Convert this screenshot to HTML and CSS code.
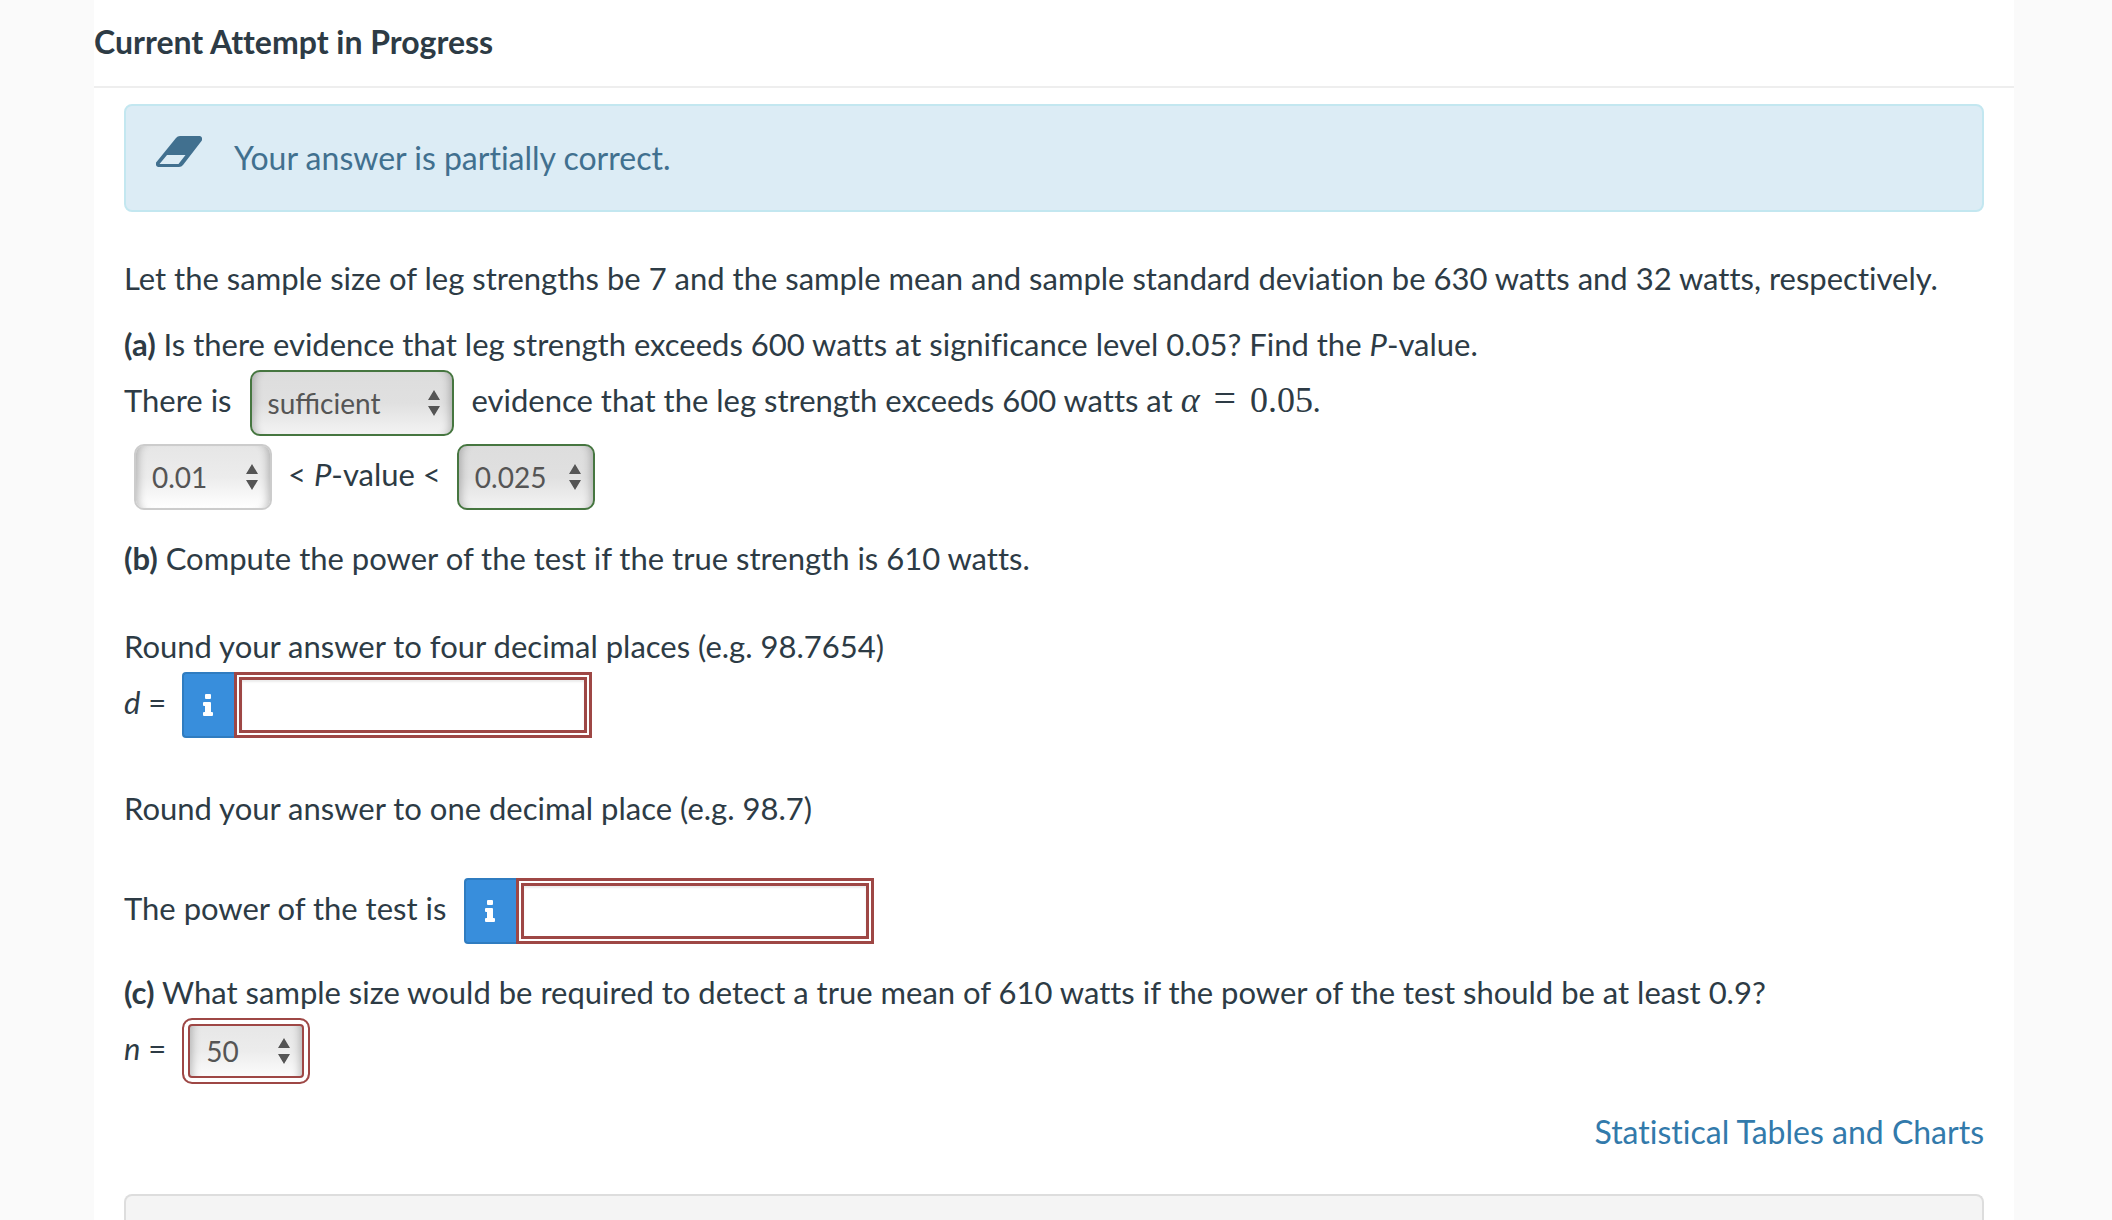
FILE: index.html
```html
<!DOCTYPE html>
<html lang="en">
<head>
<meta charset="utf-8">
<title>Current Attempt in Progress</title>
<link rel="stylesheet" href="styles.css">
</head>
<body>
<main class="panel">
  <header class="panel-header">
    <h1 class="title">Current Attempt in Progress</h1>
  </header>
  <div class="content">
    <div class="alert" role="status">
      <svg class="alert-icon" viewBox="0 0 46 31" aria-hidden="true">
        <path fill-rule="evenodd" d="M24 0H43a3 3 0 0 1 2.500 5L27 29a5 5 0 0 1-4 2H3a3 3 0 0 1-2.500-5L20 2a5 5 0 0 1 4-2zM11 19L3.500 28H22.500L29.500 19z"/>
      </svg>
      <p class="alert-text">Your answer is partially correct.</p>
    </div>

    <div class="question">
      <p class="text">Let the sample size of leg strengths be 7 and the sample mean and sample standard deviation be 630 watts and 32 watts, respectively.</p>

      <section class="part">
        <p class="text"><b>(a)</b> Is there evidence that leg strength exceeds 600 watts at significance level 0.05? Find the <i>P</i>-value.</p>
        <div class="row row-sentence">
          <label class="row-text" for="evidence">There is</label>
          <select id="evidence" class="select select-wide correct"><option>sufficient</option><option>insufficient</option></select>
          <span class="row-text">evidence that the leg strength exceeds 600 watts at <span class="math"><i>α</i><span class="equals">=</span>0.05</span>.</span>
        </div>
        <div class="row row-range">
          <select class="select" aria-label="Lower bound"><option>0.01</option></select>
          <span class="row-text">&lt; <i>P</i>-value &lt;</span>
          <select class="select correct" aria-label="Upper bound"><option>0.025</option></select>
        </div>
      </section>

      <section class="part">
        <p class="text"><b>(b)</b> Compute the power of the test if the true strength is 610 watts.</p>
        <p class="text spaced">Round your answer to four decimal places (e.g. 98.7654)</p>
        <div class="row">
          <label class="row-text" for="effect"><i>d</i> =</label>
          <div class="field">
            <button class="info" type="button" aria-label="Information">
              <svg class="info-icon" viewBox="0 0 12 22" aria-hidden="true"><path d="M3 0h4a1 1 0 0 1 1 1v3a1 1 0 0 1-1 1H3a1 1 0 0 1-1-1V1a1 1 0 0 1 1-1zM1 8h6a1 1 0 0 1 1 1v9h1a1 1 0 0 1 1 1v2a1 1 0 0 1-1 1H1a1 1 0 0 1-1-1v-2a1 1 0 0 1 1-1h1v-6H1a1 1 0 0 1-1-1V9a1 1 0 0 1 1-1z"/></svg>
            </button>
            <input id="effect" class="input" type="text">
          </div>
        </div>
        <p class="text spaced">Round your answer to one decimal place (e.g. 98.7)</p>
        <div class="row row-sentence spaced">
          <label class="row-text" for="power">The power of the test is</label>
          <div class="field">
            <button class="info" type="button" aria-label="Information">
              <svg class="info-icon" viewBox="0 0 12 22" aria-hidden="true"><path d="M3 0h4a1 1 0 0 1 1 1v3a1 1 0 0 1-1 1H3a1 1 0 0 1-1-1V1a1 1 0 0 1 1-1zM1 8h6a1 1 0 0 1 1 1v9h1a1 1 0 0 1 1 1v2a1 1 0 0 1-1 1H1a1 1 0 0 1-1-1v-2a1 1 0 0 1 1-1h1v-6H1a1 1 0 0 1-1-1V9a1 1 0 0 1 1-1z"/></svg>
            </button>
            <input id="power" class="input" type="text">
          </div>
        </div>
      </section>

      <section class="part">
        <p class="text"><b>(c)</b> What sample size would be required to detect a true mean of 610 watts if the power of the test should be at least 0.9?</p>
        <div class="row">
          <label class="row-text" for="size"><i>n</i> =</label>
          <select id="size" class="select select-small incorrect"><option>50</option></select>
        </div>
      </section>
    </div>

    <nav class="links"><a class="link" href="#">Statistical Tables and Charts</a></nav>
    <div class="well"></div>
  </div>
</main>
</body>
</html>
```
FILE: styles.css
```css
* { box-sizing: border-box; }

body {
  margin: 0;
  background: #fafafa;
  color: #2d3b45;
  font: 32px/44px Lato, sans-serif;
  font-variant-ligatures: none;
}

p, h1 { margin: 0; }

.panel {
  margin: 0 98px 0 94px;
  min-height: 100vh;
  background: #fff;
}

.panel-header {
  padding: 20px 0 22px;
  border-bottom: 2px solid #eee;
}

.title {
  font-size: 32px;
  line-height: 44px;
  font-weight: 700;
}

.content { padding: 16px 30px 0; }

.alert {
  display: flex;
  gap: 32px;
  margin-bottom: 44px;
  padding: 30px;
  border: 2px solid #c3e7f0;
  border-radius: 8px;
  background: #dcecf5;
  color: #41708f;
}

.alert-icon {
  width: 46px;
  height: 31px;
  fill: currentColor;
}

.question { font-size: 31px; }

.part { margin-top: 22px; }

.spaced { margin-top: 44px; }

.row {
  display: flex;
  align-items: center;
  gap: 16px;
  height: 74px;
}

.row-sentence { gap: 18px; }

.row-range { padding-left: 10px; }

.row-text { padding-bottom: 6px; }

.math {
  font-family: "Liberation Serif", serif;
  font-size: 36px;
  line-height: 40px;
}

.equals {
  padding: 0 14px;
  font-size: 40px;
}

.select {
  appearance: none;
  width: 138px;
  height: 66px;
  padding: 0 32px 0 16px;
  border: 2px solid #ccc;
  border-radius: 10px;
  background:
    url("data:image/svg+xml,%3Csvg xmlns='http://www.w3.org/2000/svg' width='12' height='26' fill='%23555'%3E%3Cpath d='M0 10L6 0l6 10zM0 16h12L6 26z'/%3E%3C/svg%3E") no-repeat right 12px center,
    linear-gradient(#e6e6e6, #ececec 50%, #fff);
  box-shadow: inset 10px 0 8px -8px rgba(0, 0, 0, .25), inset -10px 0 8px -8px rgba(0, 0, 0, .25);
  color: #555;
  font: 28px/44px Lato, sans-serif;
}

.select-wide { width: 204px; }

.correct {
  border-color: #467640;
  background-image:
    url("data:image/svg+xml,%3Csvg xmlns='http://www.w3.org/2000/svg' width='12' height='26' fill='%23555'%3E%3Cpath d='M0 10L6 0l6 10zM0 16h12L6 26z'/%3E%3C/svg%3E"),
    linear-gradient(#ddd, #e0e0e0 50%, #f3f3f3);
}

.select-small {
  width: 128px;
  padding-left: 22px;
  background-position: right 18px center, 0 0;
}

.incorrect {
  border-color: #9e4745;
  box-shadow:
    inset 0 0 0 4px #fff,
    inset 0 0 0 6px #9e4745,
    inset 16px 0 8px -8px rgba(0, 0, 0, .25),
    inset -16px 0 8px -8px rgba(0, 0, 0, .25);
}

.field { display: flex; }

.info {
  display: grid;
  place-items: center;
  width: 52px;
  height: 66px;
  padding: 0;
  border: 2px solid #2f7cc0;
  border-right: 0;
  border-radius: 4px 0 0 4px;
  background: #388edc;
}

.info-icon {
  width: 12px;
  height: 22px;
  fill: #fff;
}

.input {
  width: 358px;
  height: 66px;
  padding: 0 12px;
  border: 8px double #9e4745;
  background: #fff;
  box-shadow: inset 0 2px 2px rgba(0, 0, 0, .08);
  color: #555;
  font: 28px/44px Lato, sans-serif;
}

.links {
  margin-top: 22px;
  text-align: right;
}

.link {
  color: #327aab;
  text-decoration: none;
}

.well {
  height: 26px;
  margin-top: 40px;
  border: 2px solid #ddd;
  border-bottom: 0;
  border-radius: 8px 8px 0 0;
  background: #f4f4f4;
}
```
